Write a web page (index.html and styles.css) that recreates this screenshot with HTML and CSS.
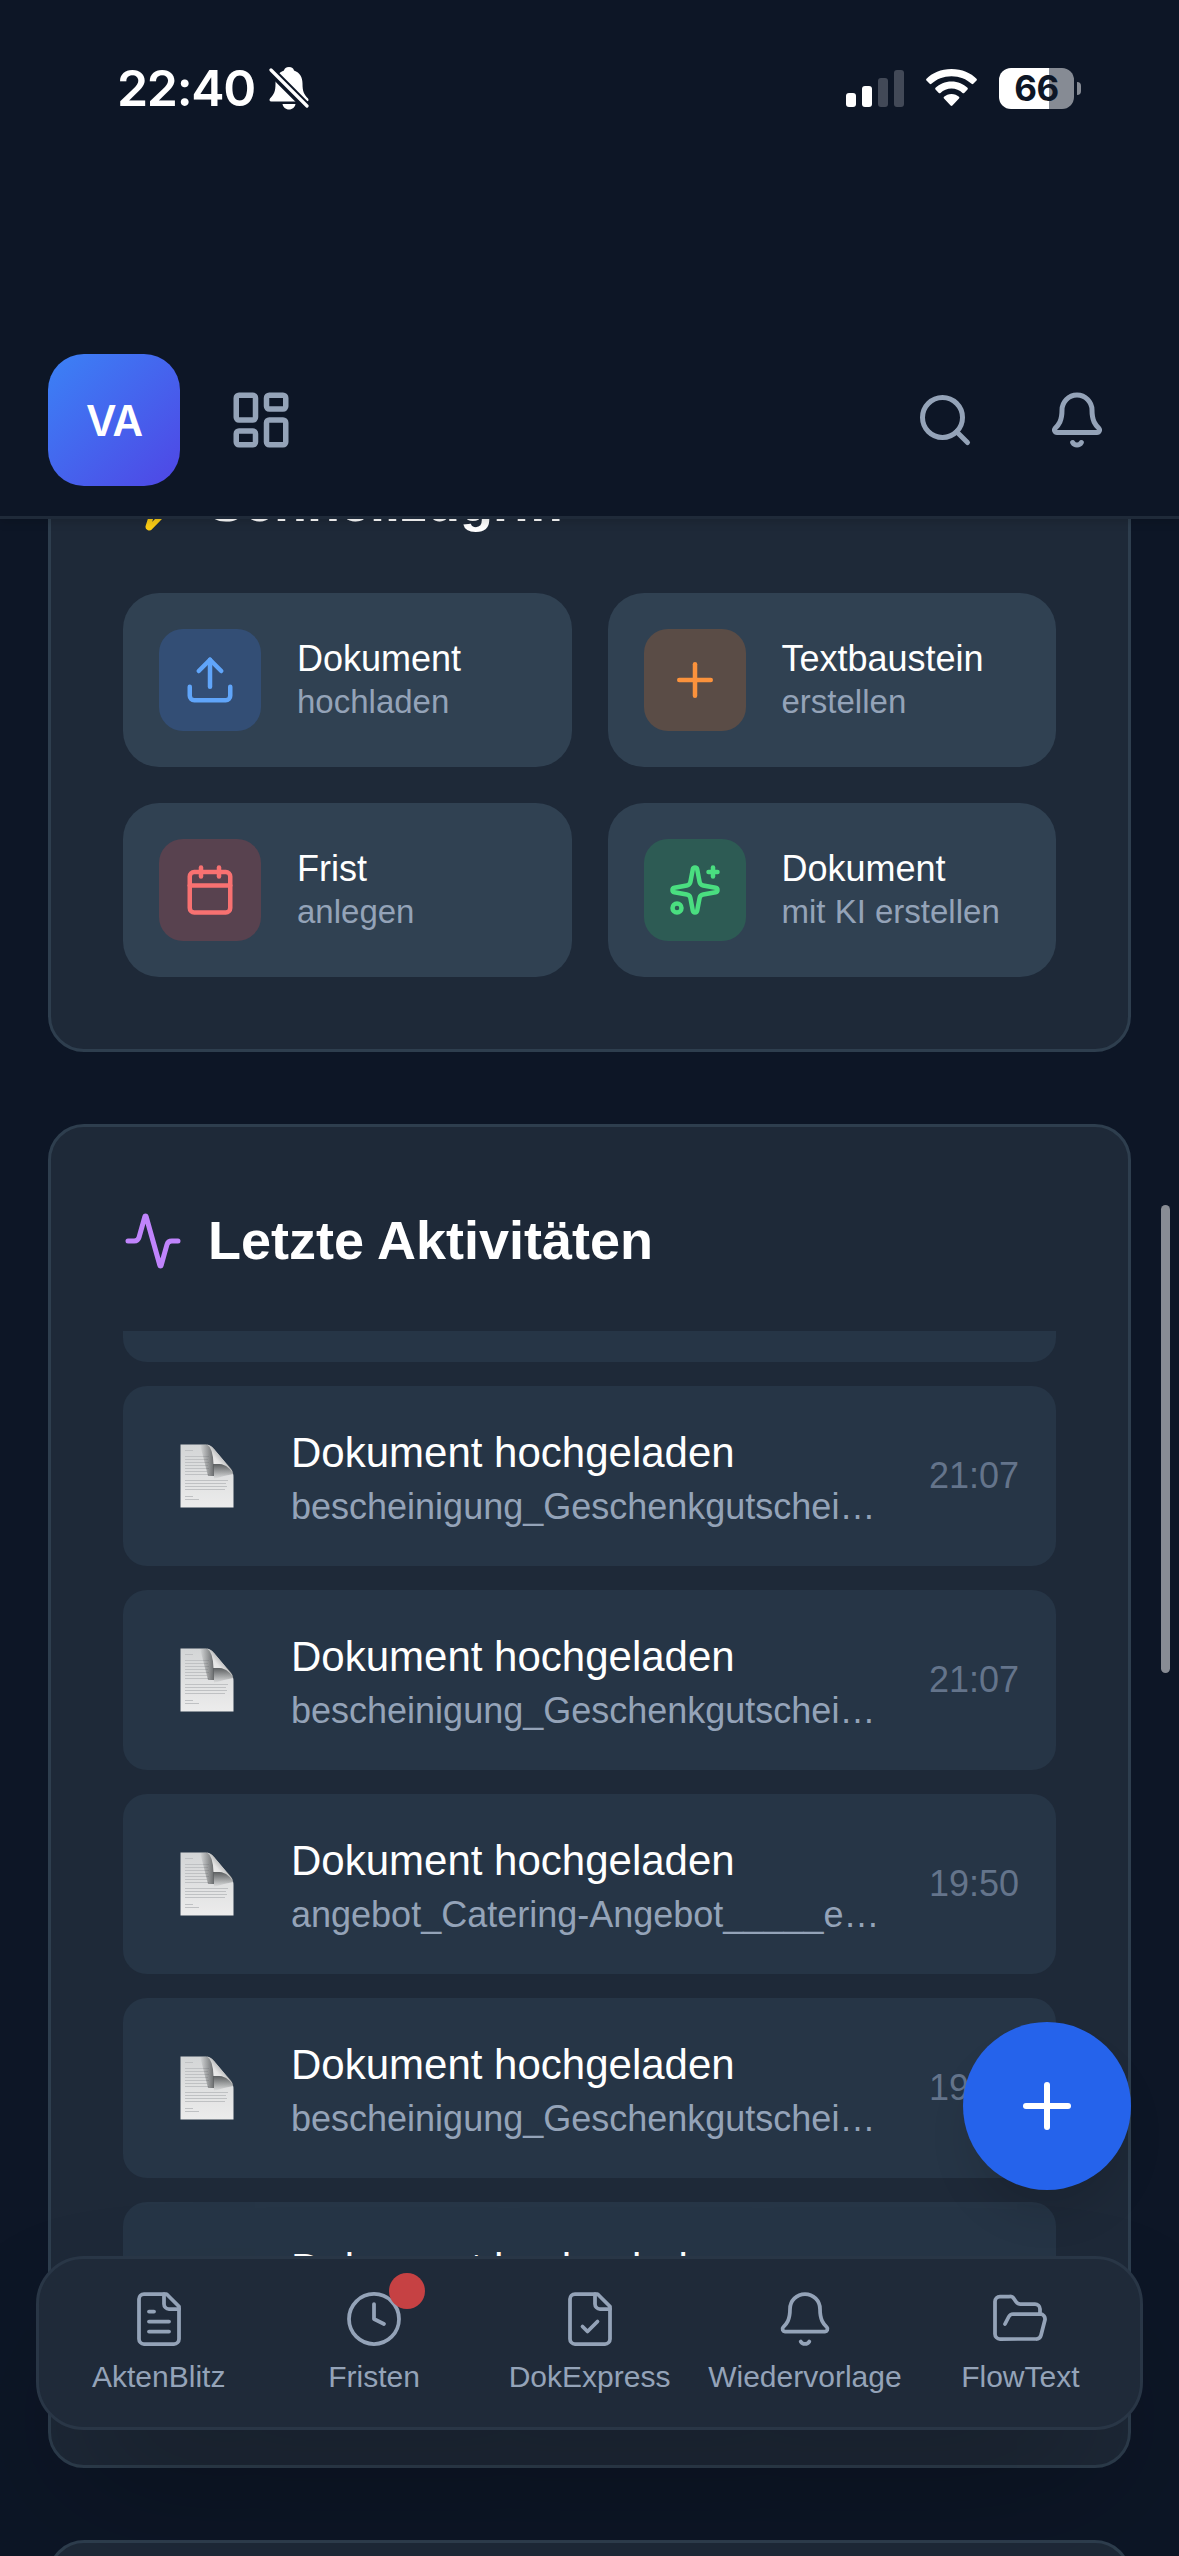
FILE: index.html
```html
<!DOCTYPE html>
<html lang="de">
  <head>
    <meta charset="UTF-8">
    <meta name="viewport" content="width=device-width, initial-scale=1.0">
    <title>Dashboard</title>
    <link rel="stylesheet" href="styles.css">
  </head>
  <body>

    <!-- Shared symbols -->
    <svg class="symbols" width="0" height="0">
      <defs>
        <linearGradient id="paper" x1="0" y1="0" x2="0" y2="1">
          <stop offset="0" stop-color="#d3d5d6"/>
          <stop offset="1" stop-color="#ececec"/>
        </linearGradient>
        <linearGradient id="curl" x1="0" y1="1" x2="0.7" y2="0.3">
          <stop offset="0" stop-color="#ffffff"/>
          <stop offset="0.6" stop-color="#e4e4e4"/>
          <stop offset="1" stop-color="#9a9c9d"/>
        </linearGradient>
        <linearGradient id="shade" x1="0" y1="0" x2="0" y2="1">
          <stop offset="0" stop-color="#5c5f61"/>
          <stop offset="1" stop-color="#5c5f61" stop-opacity="0"/>
        </linearGradient>
        <linearGradient id="shade-left" x1="1" y1="0" x2="0" y2="0">
          <stop offset="0" stop-color="#4c4f51" stop-opacity="0.8"/>
          <stop offset="1" stop-color="#4c4f51" stop-opacity="0"/>
        </linearGradient>
        <symbol id="doc" viewBox="0 0 54 64">
          <path d="M0.5 0.5H26Q31 1 34 5L50 24Q53.500 28 53.500 33V63.500H0.500Z" fill="url(#paper)"/>
          <g stroke="#bfc1c3" stroke-width="1">
            <path d="M5 6.500h8M5 12.500h24M5 15.500h23M5 18.500h24M5 21.500h23M5 24.500h24M5 27.500h22M5 30.500h24"/>
            <path d="M5 36.500h43M5 39.500h41M5 42.500h42M5 45.500h40M5 52.500h8M5 55.500h14"/>
          </g>
          <path d="M20 0.500H26Q31 1 34 5V32H28Z" fill="url(#shade-left)"/>
          <path d="M33 20H47Q53.500 26 53.500 30L44 32L34 35Z" fill="url(#shade)"/>
          <path d="M27 0.500Q33 4 33.500 20Q46 18 53 29Q52 26 50 24L34 5Q31 1 27 0.500Z" fill="url(#curl)"/>
        </symbol>
        <symbol id="bell" viewBox="0 0 24 24">
          <path d="M10.268 21a2 2 0 0 0 3.464 0"/>
          <path d="M3.262 15.326A1 1 0 0 0 4 17h16a1 1 0 0 0 .74-1.673C19.41 13.956 18 12.499 18 8A6 6 0 0 0 6 8c0 4.499-1.411 5.956-2.738 7.326"/>
        </symbol>
      </defs>
    </svg>

    <div class="screen">

      <header class="topbar">
        <div class="statusbar">
          <div class="status-left">
            <span class="clock">22:40</span>
            <svg class="muted" viewBox="0 0 40 44">
              <path d="M20 1c3 0 4.500 1.500 5 3.500 6 2 8.500 7 8.500 13 0 8 1.500 11 5.500 15 1 1.200.5 3-1.200 3H2.300C.5 35.500 0 33.500 1 32.500c4-4 5.500-7 5.500-15 0-6 2.500-11 8.500-13C15.500 2.500 17 1 20 1Z" fill="#fff"/>
              <path d="M13.500 38h13c-.5 3-3 5.500-6.500 5.500S14 41 13.500 38Z" fill="#fff"/>
              <path d="M-2 1 40 43" stroke="#0d1626" stroke-width="9"/>
              <path d="M2 4 38 40" stroke="#fff" stroke-width="3.200" stroke-linecap="round"/>
            </svg>
          </div>
          <div class="status-right">
            <div class="signal">
              <i class="bar b1"></i>
              <i class="bar b2"></i>
              <i class="bar b3 off"></i>
              <i class="bar b4 off"></i>
            </div>
            <svg class="wifi" viewBox="0 0 51 38" fill="#fff">
              <path d="M25.500 0C36 0 45 4 50.500 9.800q.8.900 0 1.800l-3.200 3.200q-.8.800-1.700 0C40.500 10 33.500 7.200 25.500 7.200S10.500 10 5.400 14.800q-.9.800-1.700 0L.5 11.600q-.8-.9 0-1.800C6 4 15 0 25.500 0Z"/>
              <path d="M25.500 12.500c6.500 0 12 2.500 16 6.300q.8.900 0 1.800l-3.300 3.300q-.8.800-1.700 0c-3-2.700-6.700-4.300-11-4.300s-8 1.600-11 4.300q-.9.800-1.700 0l-3.300-3.300q-.8-.9 0-1.800c4-3.800 9.500-6.300 16-6.300Z"/>
              <path d="M25.500 25c3 0 5.500 1.100 7.500 2.800q.9.900 0 1.800l-6.600 7q-.9.900-1.800 0l-6.600-7q-.9-.9 0-1.800c2-1.700 4.500-2.800 7.500-2.800Z"/>
            </svg>
            <div class="battery">
              <span class="battery-body">66</span>
              <span class="battery-cap"></span>
            </div>
          </div>
        </div>

        <div class="toolbar">
          <div class="logo">VA</div>
          <svg class="icon icon-grid" viewBox="0 0 24 24">
            <rect x="3" y="3" width="7" height="9" rx="1"/>
            <rect x="14" y="3" width="7" height="5" rx="1"/>
            <rect x="14" y="12" width="7" height="9" rx="1"/>
            <rect x="3" y="16" width="7" height="5" rx="1"/>
          </svg>
          <div class="toolbar-actions">
            <button class="icon-button">
              <svg class="icon" viewBox="0 0 24 24"><circle cx="11" cy="11" r="8"/><path d="m21 21-4.340-4.340"/></svg>
            </button>
            <button class="icon-button">
              <svg class="icon"><use href="#bell"/></svg>
            </button>
          </div>
        </div>
      </header>

      <main class="content">

        <section class="card">
          <h2 class="card-title">
            <svg class="icon yellow" viewBox="0 0 24 24"><path d="M4 14a1 1 0 0 1-.78-1.630l9.900-10.200a.5.5 0 0 1 .86.460l-1.920 6.020A1 1 0 0 0 13 10h7a1 1 0 0 1 .78 1.630l-9.900 10.200a.5.5 0 0 1-.86-.460l1.920-6.020A1 1 0 0 0 11 14z"/></svg>
            <span>Schnellzugriff</span>
          </h2>
          <div class="tiles">
            <div class="tile">
              <div class="tile-icon blue">
                <svg class="icon" viewBox="0 0 24 24"><path d="M12 3v12"/><path d="m17 8-5-5-5 5"/><path d="M21 15v4a2 2 0 0 1-2 2H5a2 2 0 0 1-2-2v-4"/></svg>
              </div>
              <div class="tile-text">
                <div class="tile-title">Dokument</div>
                <div class="tile-sub">hochladen</div>
              </div>
            </div>
            <div class="tile">
              <div class="tile-icon orange">
                <svg class="icon" viewBox="0 0 24 24"><path d="M5 12h14"/><path d="M12 5v14"/></svg>
              </div>
              <div class="tile-text">
                <div class="tile-title">Textbaustein</div>
                <div class="tile-sub">erstellen</div>
              </div>
            </div>
            <div class="tile">
              <div class="tile-icon red">
                <svg class="icon" viewBox="0 0 24 24"><path d="M8 2v4"/><path d="M16 2v4"/><rect x="3" y="4" width="18" height="18" rx="2"/><path d="M3 10h18"/></svg>
              </div>
              <div class="tile-text">
                <div class="tile-title">Frist</div>
                <div class="tile-sub">anlegen</div>
              </div>
            </div>
            <div class="tile">
              <div class="tile-icon green">
                <svg class="icon" viewBox="0 0 24 24"><path d="M11.017 2.814a1 1 0 0 1 1.966 0l1.051 5.558a2 2 0 0 0 1.594 1.594l5.558 1.051a1 1 0 0 1 0 1.966l-5.558 1.051a2 2 0 0 0-1.594 1.594l-1.051 5.558a1 1 0 0 1-1.966 0l-1.051-5.558a2 2 0 0 0-1.594-1.594l-5.558-1.051a1 1 0 0 1 0-1.966l5.558-1.051a2 2 0 0 0 1.594-1.594z"/><path d="M20 2v4"/><path d="M22 4h-4"/><circle cx="4" cy="20" r="2"/></svg>
              </div>
              <div class="tile-text">
                <div class="tile-title">Dokument</div>
                <div class="tile-sub">mit KI erstellen</div>
              </div>
            </div>
          </div>
        </section>

        <section class="card">
          <h2 class="card-title">
            <svg class="icon purple" viewBox="0 0 24 24"><path d="M22 12h-2.480a2 2 0 0 0-1.930 1.460l-2.350 8.360a.25.25 0 0 1-.480 0L9.240 2.180a.25.25 0 0 0-.480 0l-2.350 8.360A2 2 0 0 1 4.490 12H2"/></svg>
            <span>Letzte Aktivitäten</span>
          </h2>
          <div class="activity-list">
            <div class="activity scrolled"></div>
            <div class="activity">
              <div class="activity-icon"><svg><use href="#doc"/></svg></div>
              <div class="activity-text">
                <div class="activity-title">Dokument hochgeladen</div>
                <div class="activity-file">bescheinigung_Geschenkgutschei…</div>
              </div>
              <div class="activity-time">21:07</div>
            </div>
            <div class="activity">
              <div class="activity-icon"><svg><use href="#doc"/></svg></div>
              <div class="activity-text">
                <div class="activity-title">Dokument hochgeladen</div>
                <div class="activity-file">bescheinigung_Geschenkgutschei…</div>
              </div>
              <div class="activity-time">21:07</div>
            </div>
            <div class="activity">
              <div class="activity-icon"><svg><use href="#doc"/></svg></div>
              <div class="activity-text">
                <div class="activity-title">Dokument hochgeladen</div>
                <div class="activity-file">angebot_Catering-Angebot_____e…</div>
              </div>
              <div class="activity-time">19:50</div>
            </div>
            <div class="activity">
              <div class="activity-icon"><svg><use href="#doc"/></svg></div>
              <div class="activity-text">
                <div class="activity-title">Dokument hochgeladen</div>
                <div class="activity-file">bescheinigung_Geschenkgutschei…</div>
              </div>
              <div class="activity-time">19:50</div>
            </div>
            <div class="activity">
              <div class="activity-icon"></div>
              <div class="activity-text">
                <div class="activity-title">Dokument hochgeladen</div>
                <div class="activity-file">&nbsp;</div>
              </div>
            </div>
          </div>
        </section>

        <section class="card"></section>

      </main>

      <div class="scrollbar"></div>

      <nav class="bottom-nav">
        <a class="nav-item">
          <svg class="icon" viewBox="0 0 24 24"><path d="M15 2H6a2 2 0 0 0-2 2v16a2 2 0 0 0 2 2h12a2 2 0 0 0 2-2V7Z"/><path d="M14 2v4a2 2 0 0 0 2 2h4"/><path d="M10 9H8"/><path d="M16 13H8"/><path d="M16 17H8"/></svg>
          <span>AktenBlitz</span>
        </a>
        <a class="nav-item">
          <svg class="icon" viewBox="0 0 24 24"><circle cx="12" cy="12" r="10"/><path d="M12 6v6l4 2"/></svg>
          <span>Fristen</span>
          <i class="badge"></i>
        </a>
        <a class="nav-item">
          <svg class="icon" viewBox="0 0 24 24"><path d="M15 2H6a2 2 0 0 0-2 2v16a2 2 0 0 0 2 2h12a2 2 0 0 0 2-2V7Z"/><path d="M14 2v4a2 2 0 0 0 2 2h4"/><path d="m9 15 2 2 4-4"/></svg>
          <span>DokExpress</span>
        </a>
        <a class="nav-item">
          <svg class="icon"><use href="#bell"/></svg>
          <span>Wiedervorlage</span>
        </a>
        <a class="nav-item">
          <svg class="icon" viewBox="0 0 24 24"><path d="m6 14 1.500-2.900A2 2 0 0 1 9.240 10H20a2 2 0 0 1 1.940 2.500l-1.540 6a2 2 0 0 1-1.950 1.500H4a2 2 0 0 1-2-2V5a2 2 0 0 1 2-2h3.900a2 2 0 0 1 1.690.9l.81 1.200a2 2 0 0 0 1.670.9H18a2 2 0 0 1 2 2v2"/></svg>
          <span>FlowText</span>
        </a>
      </nav>

      <button class="fab">
        <svg class="icon" viewBox="0 0 24 24"><path d="M5 12h14"/><path d="M12 5v14"/></svg>
      </button>

    </div>

  </body>
</html>
```
FILE: styles.css
```css
* {
  box-sizing: border-box;
}

body {
  margin: 0;
  background-color: #0d1626;
  color: #fff;
  font-family: "Liberation Sans", Arial, sans-serif;
}

button {
  border: none;
  padding: 0;
  background: none;
  color: inherit;
}

.symbols {
  position: absolute;
}

.screen {
  position: relative;
  width: 1179px;
  height: 2556px;
  overflow: hidden;
}

.icon {
  display: block;
  flex: none;
  width: 60px;
  height: 60px;
  fill: none;
  stroke: currentColor;
  stroke-width: 2;
  stroke-linecap: round;
  stroke-linejoin: round;
}

/* Header */

.topbar {
  position: relative;
  z-index: 2;
  display: flex;
  flex-direction: column;
  justify-content: space-between;
  height: 519px;
  padding-bottom: 30px;
  background-color: #0d1626;
  border-bottom: 3px solid #1f2a39;
  box-shadow: 0 3px 9px rgba(0, 0, 0, 0.15);
}

.statusbar {
  display: flex;
  justify-content: space-between;
  align-items: center;
  height: 176px;
  padding: 0 98px 0 117px;
  font-family: Inter, "Liberation Sans", sans-serif;
}

.status-left,
.status-right {
  display: flex;
  align-items: center;
}

.clock {
  font-size: 50px;
  font-weight: 600;
  line-height: 60px;
  letter-spacing: -1.3px;
}

.muted {
  width: 40px;
  height: 44px;
  margin-left: 14px;
}

.signal {
  display: flex;
  align-items: flex-end;
  gap: 6px;
  height: 37px;
}

.bar {
  width: 10px;
  border-radius: 3px;
  background-color: #fff;
}

.bar.off {
  background-color: #424957;
}

.b1 { height: 14px; }
.b2 { height: 21px; }
.b3 { height: 29px; }
.b4 { height: 37px; }

.wifi {
  width: 51px;
  height: 38px;
  margin: 0 22px;
}

.battery {
  display: flex;
  align-items: center;
  gap: 3px;
}

.battery-body {
  width: 75px;
  height: 41px;
  border-radius: 12px;
  background: linear-gradient(90deg, #fff 50px, #868b94 50px);
  color: #0d1626;
  font-size: 35px;
  font-weight: 700;
  line-height: 41px;
  letter-spacing: -0.5px;
  text-align: center;
}

.battery-cap {
  width: 4px;
  height: 13px;
  border-radius: 0 4px 4px 0;
  background-color: #868b94;
}

.toolbar {
  display: flex;
  align-items: center;
  padding: 0 48px;
}

.logo {
  display: flex;
  justify-content: center;
  align-items: center;
  width: 132px;
  height: 132px;
  border-radius: 36px;
  background: linear-gradient(135deg, #3b82f6, #4f46e5);
  font-family: Inter, "Liberation Sans", sans-serif;
  font-size: 42px;
  font-weight: 600;
  letter-spacing: -1px;
}

.icon-grid {
  width: 66px;
  height: 66px;
  margin-left: 48px;
  color: #94a3b8;
}

.toolbar-actions {
  display: flex;
  gap: 24px;
  margin-left: auto;
  color: #94a3b8;
}

.icon-button {
  display: flex;
  justify-content: center;
  align-items: center;
  width: 108px;
  height: 108px;
}

/* Content, scrolled up behind the header */

.content {
  display: flex;
  flex-direction: column;
  gap: 72px;
  margin-top: -133px;
  padding: 0 48px;
}

.card {
  padding: 72px;
  border: 3px solid #2e3e4e;
  border-radius: 36px;
  background-color: #1e2938;
}

.card-title {
  display: flex;
  align-items: center;
  gap: 25px;
  height: 84px;
  margin: 0 0 48px;
  font-size: 54px;
  font-weight: 700;
}

.card-title span {
  padding-bottom: 2px;
}

.yellow { color: #facc15; }
.purple { color: #c084fc; }

.tiles {
  display: grid;
  grid-template-columns: 1fr 1fr;
  gap: 36px;
}

.tile {
  display: flex;
  align-items: center;
  gap: 36px;
  height: 174px;
  padding: 36px;
  border-radius: 36px;
  background-color: #304152;
}

.tile-icon {
  display: flex;
  flex: none;
  justify-content: center;
  align-items: center;
  width: 102px;
  height: 102px;
  border-radius: 24px;
}

.tile-icon .icon {
  width: 54px;
  height: 54px;
}

.blue { background-color: #334e75; color: #60a5fa; }
.orange { background-color: #5a4c46; color: #fb923c; }
.red { background-color: #58424f; color: #f87171; }
.green { background-color: #2d5b54; color: #4ade80; }

.tile-text {
  padding-bottom: 2px;
}

.tile-title {
  font-size: 36px;
  line-height: 45px;
}

.tile-sub {
  color: #94a3b8;
  font-size: 33px;
  line-height: 41px;
}

/* Activity list */

.activity-list {
  display: flex;
  flex-direction: column;
  gap: 24px;
  height: 1062px;
  overflow: hidden;
}

.activity {
  display: flex;
  flex: none;
  align-items: center;
  gap: 36px;
  height: 180px;
  padding: 36px;
  border-radius: 24px;
  background-color: #263546;
}

.activity.scrolled {
  margin-top: -149px;
}

.activity-icon {
  display: flex;
  flex: none;
  justify-content: center;
  width: 96px;
}

.activity-icon svg {
  width: 54px;
  height: 64px;
}

.activity-text {
  flex: 1;
  min-width: 0;
  white-space: nowrap;
}

.activity-title {
  padding-top: 1px;
  font-size: 42px;
  line-height: 60px;
}

.activity-file {
  color: #94a3b8;
  font-size: 36px;
  line-height: 47px;
}

.activity-time {
  padding-right: 1px;
  color: #64748b;
  font-size: 36px;
  line-height: 48px;
}

/* Floating parts */

.scrollbar {
  position: absolute;
  top: 1205px;
  right: 9px;
  width: 9px;
  height: 468px;
  border-radius: 5px;
  background-color: #888c94;
}

.bottom-nav {
  position: absolute;
  right: 36px;
  bottom: 126px;
  left: 36px;
  display: flex;
  height: 174px;
  padding: 30px 12px;
  border: 3px solid #293646;
  border-radius: 48px;
  background-color: #1f2a39;
  box-shadow: 0 75px 150px -36px rgba(0, 0, 0, 0.35);
}

.nav-item {
  position: relative;
  display: flex;
  flex: 1 1 0;
  flex-direction: column;
  align-items: center;
  gap: 7px;
  min-width: 0;
  color: #94a3b8;
  font-size: 30px;
  line-height: 42px;
}

.nav-item .icon {
  stroke-width: 1.5;
}

.badge {
  position: absolute;
  top: -16px;
  left: 50%;
  width: 36px;
  height: 36px;
  margin-left: 15px;
  border-radius: 50%;
  background-color: #c64143;
}

.fab {
  position: absolute;
  right: 48px;
  bottom: 366px;
  display: flex;
  justify-content: center;
  align-items: center;
  width: 168px;
  height: 168px;
  border-radius: 50%;
  background-color: #2563eb;
  box-shadow: 0 30px 45px -9px rgba(0, 0, 0, 0.12);
}

.fab .icon {
  width: 72px;
  height: 72px;
}
```
